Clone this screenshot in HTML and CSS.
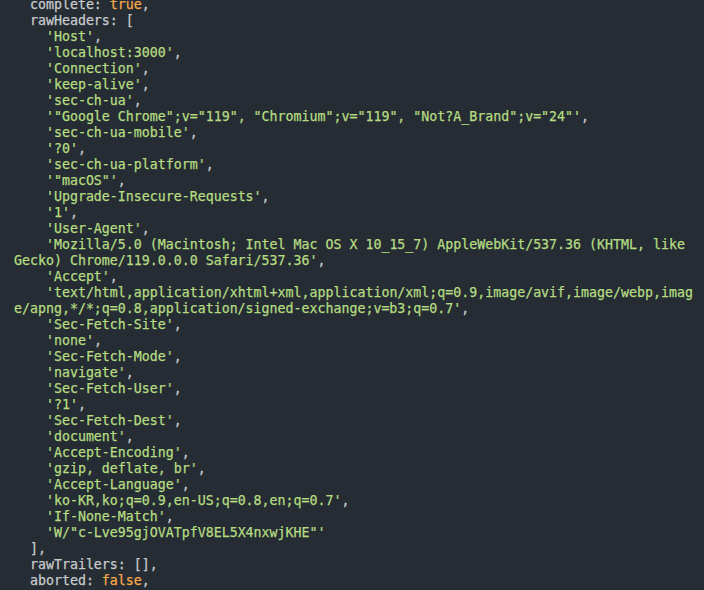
FILE: index.html
```html
<!DOCTYPE html>
<html>
<head>
<meta charset="utf-8">
<link rel="stylesheet" href="styles.css">
</head>
<body>
<pre class="term">  complete: <span class="b">true</span>,
  rawHeaders: [
    <span class="s">'Host'</span>,
    <span class="s">'localhost:3000'</span>,
    <span class="s">'Connection'</span>,
    <span class="s">'keep-alive'</span>,
    <span class="s">'sec-ch-ua'</span>,
    <span class="s">'"Google Chrome";v="119", "Chromium";v="119", "Not?A_Brand";v="24"'</span>,
    <span class="s">'sec-ch-ua-mobile'</span>,
    <span class="s">'?0'</span>,
    <span class="s">'sec-ch-ua-platform'</span>,
    <span class="s">'"macOS"'</span>,
    <span class="s">'Upgrade-Insecure-Requests'</span>,
    <span class="s">'1'</span>,
    <span class="s">'User-Agent'</span>,
    <span class="s">'Mozilla/5.0 (Macintosh; Intel Mac OS X 10_15_7) AppleWebKit/537.36 (KHTML, like
Gecko) Chrome/119.0.0.0 Safari/537.36'</span>,
    <span class="s">'Accept'</span>,
    <span class="s">'text/html,application/xhtml+xml,application/xml;q=0.9,image/avif,image/webp,imag
e/apng,*/*;q=0.8,application/signed-exchange;v=b3;q=0.7'</span>,
    <span class="s">'Sec-Fetch-Site'</span>,
    <span class="s">'none'</span>,
    <span class="s">'Sec-Fetch-Mode'</span>,
    <span class="s">'navigate'</span>,
    <span class="s">'Sec-Fetch-User'</span>,
    <span class="s">'?1'</span>,
    <span class="s">'Sec-Fetch-Dest'</span>,
    <span class="s">'document'</span>,
    <span class="s">'Accept-Encoding'</span>,
    <span class="s">'gzip, deflate, br'</span>,
    <span class="s">'Accept-Language'</span>,
    <span class="s">'ko-KR,ko;q=0.9,en-US;q=0.8,en;q=0.7'</span>,
    <span class="s">'If-None-Match'</span>,
    <span class="s">'W/"c-Lve95gjOVATpfV8EL5X4nxwjKHE"'</span>
  ],
  rawTrailers: [],
  aborted: <span class="b">false</span>,
  upgrade: <span class="b">false</span>,</pre>
</body>
</html>
```
FILE: styles.css
```css
html, body {
  margin: 0;
  padding: 0;
  background: #252c33;
  height: 100%;
  overflow: hidden;
}
.term {
  margin: -3px 0 0 0;
  padding: 0 0 0 14px;
  font-family: "DejaVu Sans Mono", "Liberation Mono", monospace;
  font-size: 13.27px;
  line-height: 16px;
  color: #c8cbce;
  white-space: pre;
  -webkit-text-stroke: 0.25px currentColor;
}
.s {
  color: #b5dc82;
}
.b {
  color: #f5a84a;
}
```
